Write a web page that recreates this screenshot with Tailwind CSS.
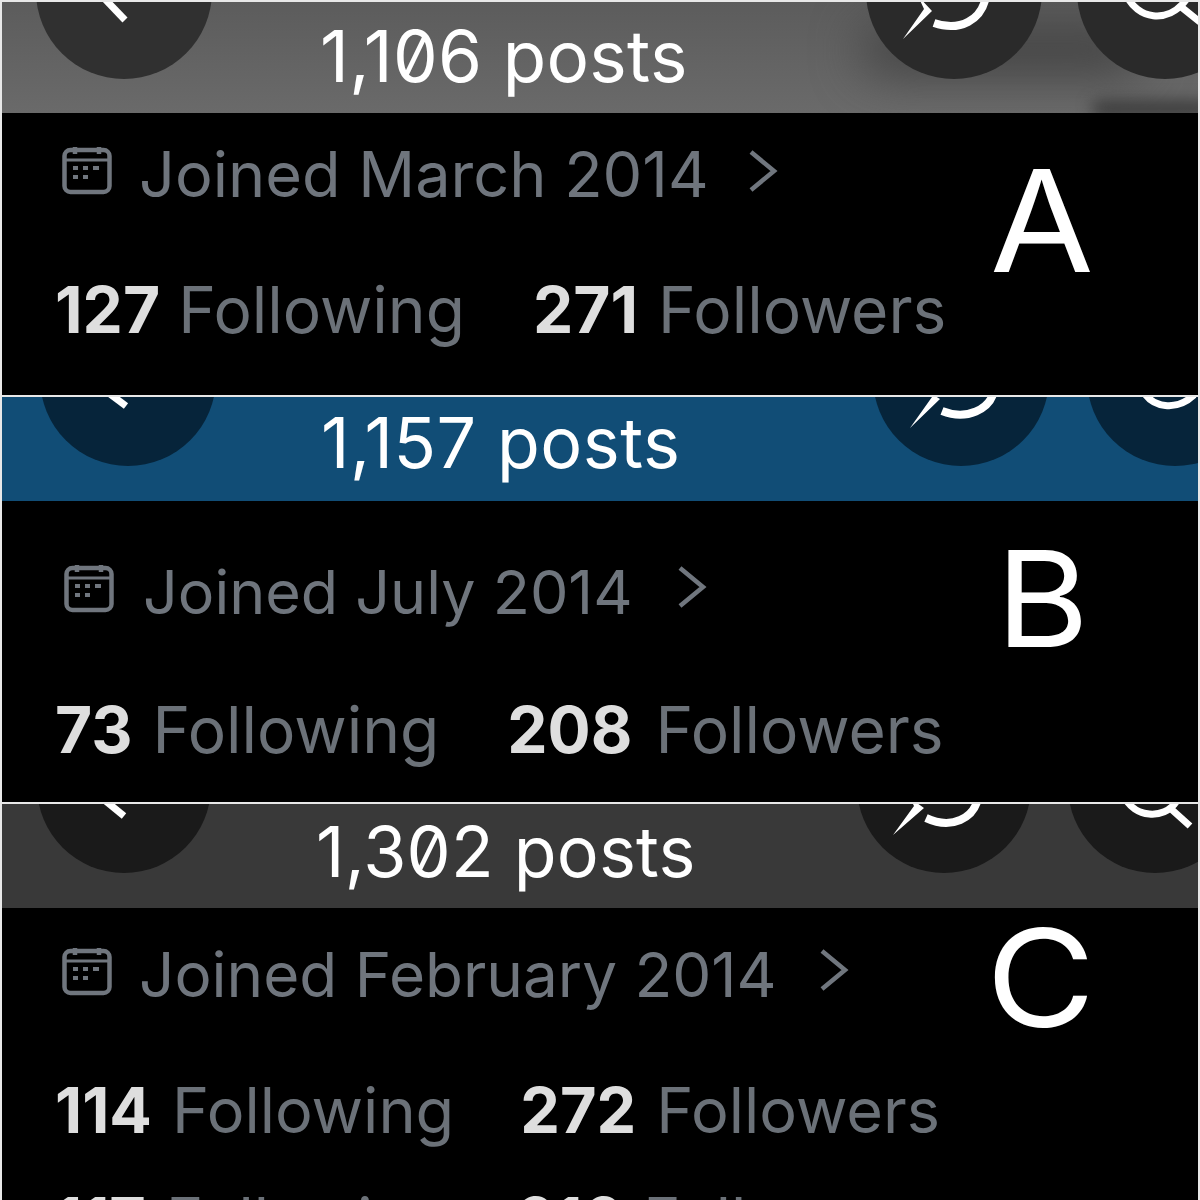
<!doctype html>
<html><head><meta charset="utf-8"><script src="https://cdn.jsdelivr.net/npm/@tailwindcss/browser@4"></script></head>
<body class="m-0 bg-black">
<div class="w-[1200px] h-[1200px] overflow-hidden bg-[#e8e8e8] pt-[2px] px-[2px] flex flex-col font-['Inter',sans-serif] relative">

<!-- A -->
<section class="h-[393px] bg-black flex flex-col relative shrink-0">
  <div class="h-[111px] relative overflow-hidden bg-gradient-to-b from-[#5c5c5c] to-[#6a6a6a] shrink-0 flex pl-[318px]">
    <div class="absolute left-[860px] top-[25px] w-[280px] h-[45px] rounded-full bg-[#404040] blur-[25px]"></div>
    <div class="absolute left-[1090px] top-[100px] w-[120px] h-[14px] rounded-full bg-[#333333] blur-[8px]"></div>
    <svg class="absolute inset-0" width="1196" height="111" viewBox="0 0 1196 111" fill="none">
      <circle cx="122" cy="-11" r="88" fill="#303030"/><circle cx="952" cy="-11" r="88" fill="#2a2a2a"/><circle cx="1163" cy="-11" r="88" fill="#2a2a2a"/>
      <path d="M100 -6 L123 18" stroke="#fff" stroke-width="7"/>
      <path d="M984 -6 C980 18 958 30 932 21" stroke="#fff" stroke-width="8"/>
      <path d="M901 37 L922 7 L916 -6 L930 9 Z" fill="#fff"/>
      <path d="M1124 -8 C1135 18 1166 22 1184 -2 M1178 4 L1198 20" stroke="#fff" stroke-width="7"/>
    </svg>
    <span class="relative text-white text-[71px] leading-none mt-[19px] [font-feature-settings:'zero'] tracking-[0.3px]">1,106 posts</span>
  </div>
  <div class="flex items-center h-[52px] mt-[35px] pl-[60px] text-[#6f757d] text-[63px] leading-none">
    <svg class="shrink-0 -mt-[8px]" width="50" height="50" viewBox="0 0 50 50" fill="none"><rect x="2.5" y="5" width="45" height="42" rx="6" stroke="#70767e" stroke-width="4.5"/><path d="M13 2v7M37 2v7" stroke="#70767e" stroke-width="4.5"/><path d="M3 15h44" stroke="#70767e" stroke-width="3"/><path d="M11 23h5M21 23h5M31 23h6M11 32h5M21 32h5" stroke="#70767e" stroke-width="4"/></svg>
    <span class="ml-[27px]">Joined March 2014</span>
    <svg class="ml-[37px] -mt-[6px]" width="34" height="44" viewBox="0 0 34 44" fill="none"><path d="M5 3 L28 22 L5 41" stroke="#70767e" stroke-width="4.5"/></svg>
  </div>
  <div class="flex items-center pl-[53px] mt-[78px] text-[64px] leading-none text-[#6b7178]">
    <b class="text-[#dedede] font-bold">127</b><span class="ml-[18px]">Following</span>
    <b class="text-[#dedede] font-bold ml-[68px]">271</b><span class="ml-[20px]">Followers</span>
  </div>
  <span class="absolute left-[988px] top-[147px] text-white text-[142px] leading-none origin-left scale-x-[1.06]">A</span>
</section>

<div class="h-[2px] bg-[#e8e8e8] shrink-0"></div>

<!-- B -->
<section class="h-[405px] bg-black flex flex-col relative shrink-0">
  <div class="h-[104px] relative overflow-hidden bg-[#114d76] shrink-0 flex pl-[319px]">
    <svg class="absolute inset-0" width="1196" height="104" viewBox="0 0 1196 104" fill="none">
      <circle cx="126" cy="-19" r="88" fill="#06243a"/><circle cx="959" cy="-19" r="88" fill="#06243a"/><circle cx="1173" cy="-19" r="88" fill="#06243a"/>
      <path d="M104 -6 L124 9" stroke="#fff" stroke-width="7"/>
      <path d="M992 -6 C988 12 965 24 940 14" stroke="#fff" stroke-width="8"/>
      <path d="M908 31 L930 0 L925 -6 L938 2 Z" fill="#fff"/>
      <path d="M1140 -8 C1150 12 1175 14 1192 -2" stroke="#fff" stroke-width="7"/>
    </svg>
    <span class="relative text-white text-[70px] leading-none mt-[11px] tracking-[0.5px]">1,157 posts</span>
  </div>
  <div class="flex items-center h-[52px] mt-[65px] pl-[62px] text-[#6f757d] text-[61px] leading-none">
    <svg class="shrink-0 -mt-[8px]" width="50" height="50" viewBox="0 0 50 50" fill="none"><rect x="2.5" y="5" width="45" height="42" rx="6" stroke="#70767e" stroke-width="4.5"/><path d="M13 2v7M37 2v7" stroke="#70767e" stroke-width="4.5"/><path d="M3 15h44" stroke="#70767e" stroke-width="3"/><path d="M11 23h5M21 23h5M31 23h6M11 32h5M21 32h5" stroke="#70767e" stroke-width="4"/></svg>
    <span class="ml-[29px]">Joined July 2014</span>
    <svg class="ml-[42px] -mt-[10px]" width="34" height="44" viewBox="0 0 34 44" fill="none"><path d="M5 3 L28 22 L5 41" stroke="#70767e" stroke-width="4.5"/></svg>
  </div>
  <div class="flex items-center pl-[53px] mt-[80px] text-[64px] leading-none text-[#6b7178]">
    <b class="text-[#dedede] font-bold">73</b><span class="ml-[20px]">Following</span>
    <b class="text-[#dedede] font-bold ml-[68px]">208</b><span class="ml-[23px]">Followers</span>
  </div>
  <span class="absolute left-[994px] top-[134px] text-white text-[134px] leading-none origin-left scale-x-[1.06]">B</span>
</section>

<div class="h-[2px] bg-[#e8e8e8] shrink-0"></div>

<!-- C -->
<section class="h-[400px] bg-black flex flex-col relative shrink-0 overflow-hidden">
  <div class="h-[104px] relative overflow-hidden bg-[#393939] shrink-0 flex pl-[314px]">
    <svg class="absolute inset-0" width="1196" height="104" viewBox="0 0 1196 104" fill="none">
      <circle cx="122" cy="-18" r="87" fill="#1a1a1a"/><circle cx="942" cy="-18" r="87" fill="#1a1a1a"/><circle cx="1153" cy="-18" r="87" fill="#1a1a1a"/>
      <path d="M100 -6 L122 12" stroke="#fff" stroke-width="7"/>
      <path d="M976 -6 C972 14 950 26 924 14" stroke="#fff" stroke-width="8"/>
      <path d="M891 31 L912 2 L908 -6 L922 4 Z" fill="#fff"/>
      <path d="M1122 -8 C1132 14 1162 16 1174 -2 M1168 4 L1188 22" stroke="#fff" stroke-width="7"/>
    </svg>
    <span class="relative text-white text-[70px] leading-none mt-[13px] [font-feature-settings:'zero'] tracking-[0.2px]">1,302 posts</span>
  </div>
  <div class="flex items-center h-[52px] mt-[41px] pl-[60px] text-[#6f757d] text-[62px] leading-none">
    <svg class="shrink-0 -mt-[8px]" width="50" height="50" viewBox="0 0 50 50" fill="none"><rect x="2.5" y="5" width="45" height="42" rx="6" stroke="#70767e" stroke-width="4.5"/><path d="M13 2v7M37 2v7" stroke="#70767e" stroke-width="4.5"/><path d="M3 15h44" stroke="#70767e" stroke-width="3"/><path d="M11 23h5M21 23h5M31 23h6M11 32h5M21 32h5" stroke="#70767e" stroke-width="4"/></svg>
    <span class="ml-[27px]">Joined February 2014</span>
    <svg class="ml-[40px] -mt-[10px]" width="34" height="44" viewBox="0 0 34 44" fill="none"><path d="M5 3 L28 22 L5 41" stroke="#70767e" stroke-width="4.5"/></svg>
  </div>
  <div class="flex items-center pl-[53px] mt-[78px] text-[63px] leading-none text-[#6b7178]">
    <b class="text-[#dedede] font-bold">114</b><span class="ml-[20px]">Following</span>
    <b class="text-[#dedede] font-bold ml-[66px]">272</b><span class="ml-[20px]">Followers</span>
  </div>
  <div class="flex items-center pl-[53px] mt-[47px] text-[63px] leading-none text-[#6b7178]">
    <b class="text-[#dedede] font-bold">117</b><span class="ml-[20px]">Following</span>
    <b class="text-[#dedede] font-bold ml-[66px]">616</b><span class="ml-[20px]">Followers</span>
  </div>
  <span class="absolute left-[984px] top-[106px] text-white text-[136px] leading-none origin-left scale-x-[1.1]">C</span>
</section>
</div>
</body></html>
